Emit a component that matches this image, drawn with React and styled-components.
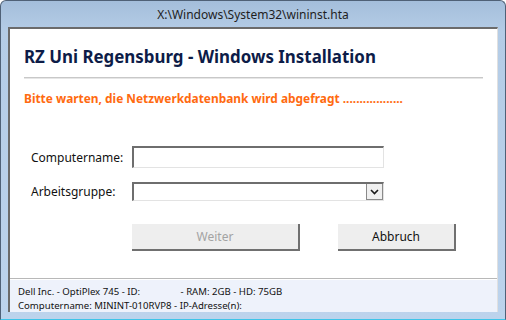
import styled, { createGlobalStyle } from "styled-components";

const GlobalStyle = createGlobalStyle`
  html, body {
    margin: 0;
    padding: 0;
    background: #ffffff;
  }
  body {
    font-family: "Noto Sans", "Open Sans", sans-serif;
  }
`;

const App = () => {
  return (
    <>
      <GlobalStyle />
      <Window>
        <TitleBar>X:\Windows\System32\wininst.hta</TitleBar>
        <Client>
          <Content>
            <Heading>RZ Uni Regensburg - Windows Installation</Heading>
            <Rule />
            <Notice>Bitte warten, die Netzwerkdatenbank wird abgefragt ..................</Notice>

            <Form>
              <Row>
                <Label>Computername:</Label>
                <TextBox type="text" />
              </Row>
              <Row>
                <Label>Arbeitsgruppe:</Label>
                <Select>
                  <DropButton>
                    <svg width="9" height="6" viewBox="0 0 9 6">
                      <path d="M1 1 L4.5 4.5 L8 1" fill="none" stroke="#1a1a1a" strokeWidth="1.6" />
                    </svg>
                  </DropButton>
                </Select>
              </Row>
            </Form>

            <Buttons>
              <Button width="168px" disabled>Weiter</Button>
              <Button width="118px">Abbruch</Button>
            </Buttons>
          </Content>

          <StatusBar>
            <div>Dell Inc. - OptiPlex 745 - ID:<Gap /> - RAM: 2GB - HD: 75GB</div>
            <div>Computername: MININT-010RVP8 - IP-Adresse(n):</div>
          </StatusBar>
        </Client>
      </Window>
    </>
  );
};

export default App;

const Window = styled.div`
  width: 506px;
  height: 320px;
  box-sizing: border-box;
  display: flex;
  flex-direction: column;
  border: 1px solid #4f6177;
  border-bottom-color: #3fc4e8;
  border-radius: 6px 6px 0 0;
  background: linear-gradient(180deg, #a4bedb 0px, #b4cce6 30px, #bcd3ec 100%);
  padding: 0 7px 7px 7px;
`;

const TitleBar = styled.div`
  height: 25px;
  display: flex;
  align-items: center;
  justify-content: center;
  padding-top: 1px;
  font-size: 12px;
  color: #1e1e1e;
`;

const Client = styled.div`
  flex: 1;
  display: flex;
  flex-direction: column;
  background: #ffffff;
  border-top: 2px solid #6b6b6b;
  border-left: 2px solid #6b6b6b;
  border-right: 1px solid #e0e0e0;
`;

const Content = styled.div`
  flex: 1;
  padding: 0 14px 0 14px;
`;

const Heading = styled.h1`
  margin: 17px 0 0 0;
  font-size: 16.9px;
  font-weight: bold;
  color: #0d1c48;
  line-height: 22px;
`;

const Rule = styled.div`
  margin-top: 9px;
  height: 1px;
  background: #c8c8c8;
  border-bottom: 1px solid #e6e6e6;
`;

const Notice = styled.div`
  margin-top: 11px;
  font-size: 11.9px;
  font-weight: bold;
  color: #ff6a10;
  line-height: 16px;
`;

const Form = styled.div`
  margin-top: 40px;
  display: flex;
  flex-direction: column;
  gap: 14px;
`;

const Row = styled.div`
  display: flex;
  align-items: center;
`;

const Label = styled.div`
  width: 101px;
  padding-left: 7px;
  font-size: 12px;
  color: #111111;
`;

const TextBox = styled.input`
  width: 252px;
  height: 22px;
  box-sizing: border-box;
  margin: 0;
  border: 1px solid #e3e3e3;
  border-top: 2px solid #6e6e6e;
  border-left: 2px solid #6e6e6e;
  background: #ffffff;
  outline: none;
`;

const Select = styled.div`
  width: 252px;
  height: 19px;
  box-sizing: border-box;
  display: flex;
  justify-content: flex-end;
  align-items: stretch;
  border: 1px solid #e3e3e3;
  border-top: 2px solid #6e6e6e;
  border-left: 2px solid #6e6e6e;
  background: #ffffff;
`;

const DropButton = styled.div`
  width: 15px;
  display: flex;
  align-items: center;
  justify-content: center;
  background: #f0f0f0;
  border: 1px solid #8a8a8a;
  border-top: none;
`;

const Buttons = styled.div`
  margin-top: 23px;
  padding-left: 108px;
  display: flex;
  gap: 38px;
`;

const Button = styled.button`
  width: ${(p) => p.width};
  height: 27px;
  margin: 0;
  box-sizing: border-box;
  background: #eeeeee;
  border: none;
  border-right: 2px solid #707070;
  border-bottom: 2px solid #707070;
  font-family: "Noto Sans", "Open Sans", sans-serif;
  font-size: 12px;
  color: #111111;

  &:disabled {
    color: #a3a3a3;
  }
`;

const StatusBar = styled.div`
  height: 34px;
  box-sizing: border-box;
  padding: 6px 0 0 8px;
  background: #eef2fb;
  border-top: 1px solid #b8b8b8;
  box-shadow: inset 0 1px 0 #ffffff;
  font-size: 9.6px;
  line-height: 14px;
  color: #111111;
`;

const Gap = styled.span`
  display: inline-block;
  width: 38px;
`;
